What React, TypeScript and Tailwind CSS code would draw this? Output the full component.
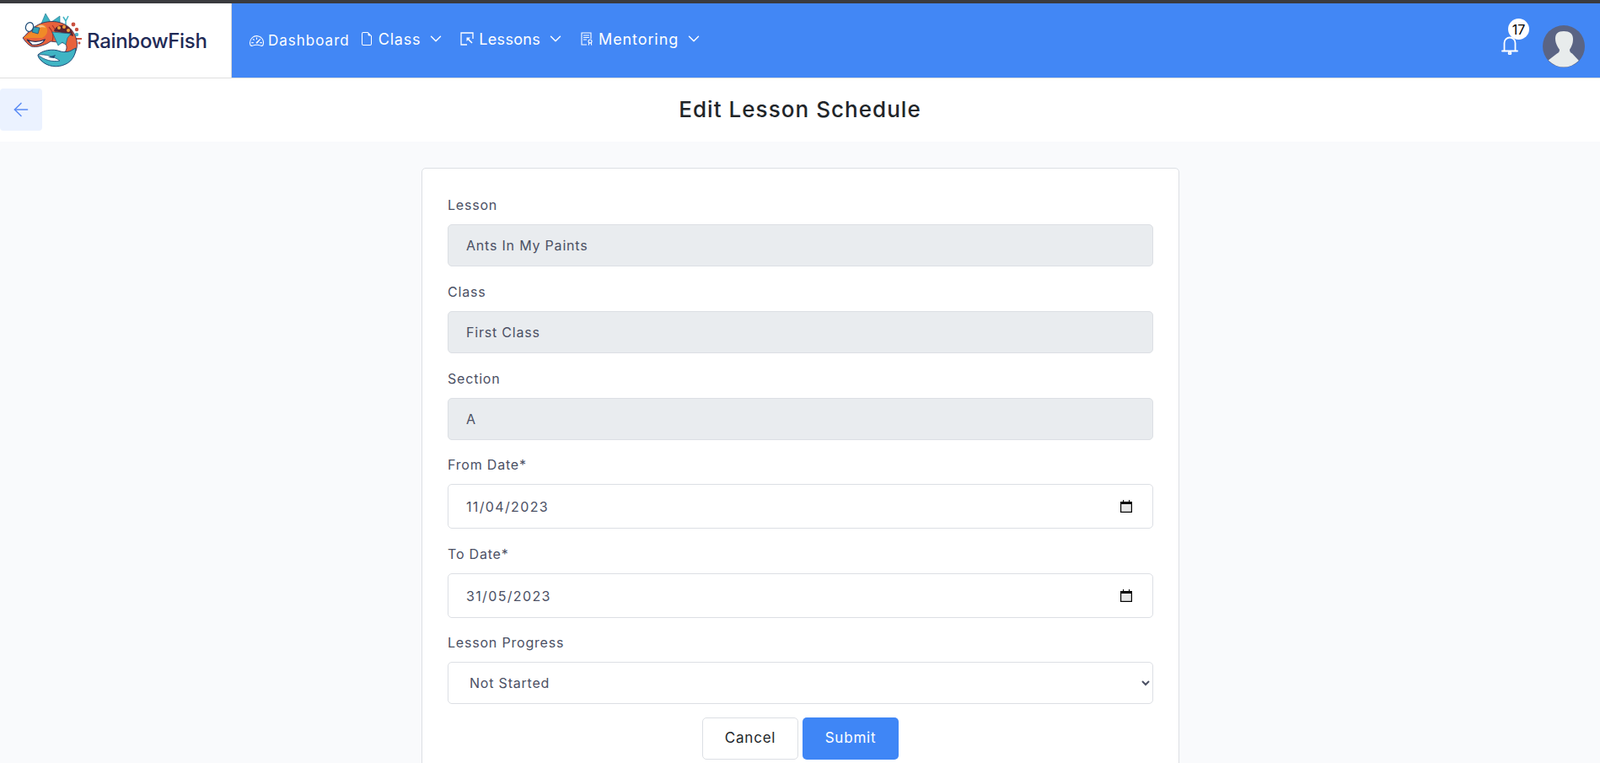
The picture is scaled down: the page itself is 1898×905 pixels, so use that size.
import { ChevronDown, ArrowLeft } from "lucide-react";
import { BsSpeedometer2, BsFileEarmark } from "react-icons/bs";

const FishLogo = () => (
  <svg viewBox="26 17 72 65" className="w-[72px] h-[65px] shrink-0">
    {/* top fins */}
    <path d="M49 29 L54 17 L60 27 Z" fill="#3fb4c4" stroke="#1d6f8a" strokeWidth="0.6" />
    <path d="M61 27 L71 20 L71 29 Z" fill="#3fb4c4" stroke="#1d6f8a" strokeWidth="0.6" />
    {/* coral bits */}
    <path d="M78 32 L78 24 M75 21 L78 26 L81 20" stroke="#3fb4c4" strokeWidth="1.5" fill="none" />
    <circle cx="87" cy="30" r="2.400" fill="#c9503f" />
    <circle cx="91" cy="36" r="2.200" fill="#c9503f" />
    <circle cx="91" cy="42" r="2.200" fill="#4fb2c9" />
    <path d="M90 47 L97 47" stroke="#c9503f" strokeWidth="2" />
    <circle cx="94" cy="52" r="1.500" fill="#c9503f" />
    {/* body with tail arc */}
    <path
      d="M27 46 C33 40 40 31 51 28 C66 24 81 28 88 41 C94 52 92 63 84 69 C82 70 78 66 76 64 C80 60 80 54 76 52 L60 50 C55 54 44 58 37 56 C33 54 30 50 27 46 Z"
      fill="#e8623c"
      stroke="#1f2a56"
      strokeWidth="0.8"
    />
    {/* head shine */}
    <path d="M28 46 L42 35 C44 30 52 28 55 33 C58 38 55 44 50 46 Z" fill="#f08a28" />
    <path d="M44 33 C47 30 52 30 54 34 C52 33 48 33 44 35 Z" fill="#f7c089" />
    {/* eye tube */}
    <path d="M40 33 L47 34 L45 41 L38 39 Z" fill="#2f9fb5" stroke="#1f4d78" strokeWidth="0.8" />
    <ellipse cx="35" cy="33" rx="4.500" ry="5.500" transform="rotate(20 35 33)" fill="#fff" stroke="#1f4d78" strokeWidth="1.200" />
    {/* mouth */}
    <path d="M32 48 C38 51 46 51 53 48 C51 53 43 55 38 54 Z" fill="#fff" stroke="#1f2a56" strokeWidth="1.100" />
    {/* stripes */}
    <path d="M58 33 C63 38 64 44 62 50 M62 31 C66 36 67 40 66 44" stroke="#a8322d" strokeWidth="1.200" fill="none" />
    {/* back gear */}
    <path d="M64 38 C66 30 78 27 85 37 C86 39 87 42 87 44 L70 39 Z" fill="#5c2430" />
    <circle cx="70" cy="34" r="2" fill="#f2a13a" />
    <circle cx="76" cy="33" r="2" fill="#f2a13a" />
    <circle cx="81" cy="37" r="2" fill="#f2a13a" />
    {/* wing */}
    <path d="M62 39 L84 41 L80 46 L78 54 L74 51 L69 55 Z" fill="#46bccb" stroke="#1d6f8a" strokeWidth="0.8" />
    {/* whale tail */}
    <path
      d="M72 62 C76 63 82 63 86 60 L90 58 C90 66 85 74 78 77 C68 82 56 80 49 73 C46 70 45 68 45 66 C50 61 62 58 72 62 Z"
      fill="#3fb4c4"
      stroke="#1f4d78"
      strokeWidth="1"
    />
    <path d="M45 66 C54 65 64 68 71 73 C62 75 52 72 45 66 Z" fill="#fff" stroke="#1f4d78" strokeWidth="0.8" />
    <path d="M57 69 L66 66 L64 70 Z" fill="#1f4d78" />
  </svg>
);

const LessonsIcon = () => (
  <svg viewBox="0 0 16 16" className="w-4 h-4" fill="none" stroke="currentColor" strokeWidth="1.3">
    <path d="M8 15H1V1h14v7" />
    <path d="M8.300 7.300L14 13" strokeWidth="1.600" />
    <path d="M7.500 6.500h4.500l-4.500 4.500z" fill="currentColor" stroke="none" />
  </svg>
);

const MentoringIcon = () => (
  <svg viewBox="0 0 16 16" className="w-4 h-4" fill="none" stroke="currentColor" strokeWidth="1.100">
    <path d="M8 15H2V1h11v7" />
    <path d="M4 4h7M4 6.500h7M4 9h4" />
    <circle cx="12" cy="11" r="2" />
    <path d="M10.800 13l-.6 2.600M13.200 13l.6 2.600" />
  </svg>
);

const Bell = () => (
  <svg viewBox="0 0 20 23" className="w-5 h-[23px]" fill="none" stroke="currentColor" strokeWidth="1.800">
    <path d="M3.500 18V9a6.500 6.500 0 0 1 13 0v9" />
    <path d="M1 18.500h18" strokeLinecap="round" />
    <circle cx="10" cy="21" r="1.400" />
  </svg>
);

const Avatar = () => (
  <svg viewBox="0 0 50 50" className="w-[50px] h-[50px] mt-[14px]">
    <circle cx="25" cy="25" r="25" fill="#5a6484" />
    <clipPath id="avatar-clip">
      <circle cx="25" cy="25" r="24.500" />
    </clipPath>
    <path
      clipPath="url(#avatar-clip)"
      d="M15 16c0-6 3-9 10-9s11 3 11 9c0 3-.5 6-1.500 8-.8 2-2 4-2.500 5 0 2 1 3.500 3 4.500l8 8.500v10H6V42l11-8.500c2-1 3-2.500 3-4.500-.5-1-2-3-3-5-1-2-2-5-2-8z"
      fill="#e8ecec"
    />
  </svg>
);

const CalendarIcon = () => (
  <svg viewBox="0 0 14 15" className="w-[14px] h-[15px]">
    <path d="M0 2h3V0h1v2h6V0h1v2h3v13H0z" fill="#000" />
    <rect x="1.200" y="5" width="11.600" height="8.800" fill="#e6e6e6" />
  </svg>
);

const labelCls = "block h-6 mb-[11px] text-[16px] leading-6 text-[#4b5064] tracking-[0.8px]";
const inputCls =
  "w-full px-[21px] border border-[#dcdfe4] rounded-[5px] text-[16px] text-[#4b5064] tracking-[0.8px] outline-none";

const ReadOnlyField = ({
  label,
  value,
  className = "mb-[18px]",
}: {
  label: string;
  value: string;
  className?: string;
}) => (
  <div className={className}>
    <label className={labelCls}>{label}</label>
    <input readOnly value={value} className={`${inputCls} h-[50px] bg-[#e9ecef]`} />
  </div>
);

const DateField = ({
  label,
  value,
  className = "mb-[18px]",
}: {
  label: string;
  value: string;
  className?: string;
}) => (
  <div className={className}>
    <label className={labelCls}>{label}</label>
    <div className={`${inputCls} h-[53px] bg-white flex items-center justify-between pr-[24px]`}>
      <span className="tracking-[1.35px]">{value}</span>
      <CalendarIcon />
    </div>
  </div>
);

const NavItem = ({
  icon,
  label,
  textClass,
}: {
  icon: React.ReactNode;
  label: string;
  textClass: string;
}) => (
  <div className="flex items-center text-white text-[18px] mb-1">
    <span className="mr-[6px]">{icon}</span>
    <span className={textClass}>{label}</span>
    <ChevronDown className="w-[22px] h-[22px] ml-[7px]" strokeWidth={1.6} />
  </div>
);

export default function App() {
  return (
    <div className="h-[905px] overflow-hidden bg-[#f9fafc] font-['Inter','Liberation_Sans',sans-serif]">
      <div className="h-1 bg-[#3a3b3f]" />
      {/* top nav */}
      <header className="flex h-[89px] border-b border-[#dedede]">
        <div className="w-[275px] bg-white border-r border-[#d8d8d8] flex items-center pl-[26px] gap-[5px]">
          <FishLogo />
          <span className="text-[24px] font-medium text-[#1f2a56] tracking-[-0.3px] mt-[1px]">
            RainbowFish
          </span>
        </div>
        <div className="flex-1 bg-[#4287f5] flex items-center pl-[21px] pr-[18px]">
          <div className="flex items-center text-white text-[17px] tracking-[1px] mr-[12px] mt-[1px]">
            <BsSpeedometer2 className="w-[17px] h-[17px] mr-[5px]" />
            Dashboard
          </div>
          <div className="flex items-center gap-[18px]">
            <NavItem icon={<BsFileEarmark className="w-4 h-4" />} label="Class" textClass="tracking-[0.8px]" />
            <NavItem icon={<LessonsIcon />} label="Lessons" textClass="tracking-[0.3px]" />
            <NavItem icon={<MentoringIcon />} label="Mentoring" textClass="tracking-[0.9px]" />
          </div>
          <div className="ml-auto flex items-center gap-[29px]">
            <div className="relative text-white mt-[11px]">
              <Bell />
              <span className="absolute -top-[20px] left-[8px] w-[25px] h-[25px] rounded-full bg-white text-black text-[16px] flex items-center justify-center">
                17
              </span>
            </div>
            <Avatar />
          </div>
        </div>
      </header>

      {/* title row */}
      <div className="h-[75px] bg-white grid grid-cols-[50px_1fr_50px] items-center">
        <button className="w-[50px] h-[50px] mt-[-1px] bg-[#ebf2ff] rounded-[4px] flex items-center justify-center text-[#5a8bf5]">
          <ArrowLeft className="w-[26px] h-[26px]" strokeWidth={1.4} />
        </button>
        <h1 className="text-center text-[26px] font-medium text-[#212529] tracking-[1.05px] mt-[-2px]">
          Edit Lesson Schedule
        </h1>
      </div>

      {/* form card */}
      <div className="w-[899px] mt-[31px] ml-[500px] bg-white border border-[#dcdfe4] rounded-[5px] px-[30px] pt-[31px] pb-8">
        <ReadOnlyField label="Lesson" value="Ants In My Paints" />
        <ReadOnlyField label="Class" value="First Class" />
        <ReadOnlyField label="Section" value="A" className="mb-[17px]" />
        <DateField label="From Date*" value="11/04/2023" />
        <DateField label="To Date*" value="31/05/2023" className="mb-[17px]" />
        <div className="mb-4">
          <label className={labelCls}>Lesson Progress</label>
          <select defaultValue="Not Started" className={`${inputCls} h-[50px] bg-white`}>
            <option>Not Started</option>
            <option>In Progress</option>
            <option>Completed</option>
          </select>
        </div>
        <div className="flex justify-center gap-[5px]">
          <button className="w-[114px] h-[50px] rounded-[5px] border border-[#dcdfe4] bg-white text-[17px] tracking-[0.8px] text-[#212529]">
            Cancel
          </button>
          <button className="w-[114px] h-[50px] rounded-[5px] bg-[#3f86f6] text-[17px] tracking-[0.8px] text-white">
            Submit
          </button>
        </div>
      </div>
    </div>
  );
}
